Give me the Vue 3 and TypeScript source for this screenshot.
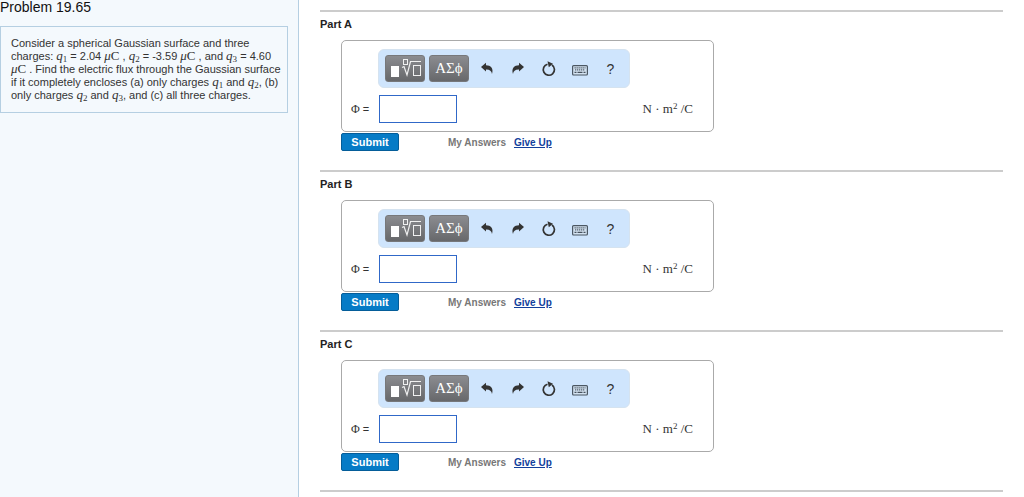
<script setup lang="ts">
import { reactive } from 'vue'

interface Part {
  id: string
  answer: string
}

const parts = reactive<Part[]>([
  { id: 'A', answer: '' },
  { id: 'B', answer: '' },
  { id: 'C', answer: '' },
])
</script>

<template>
  <div class="page">
    <aside class="sidebar">
      <h1>Problem 19.65</h1>
      <p class="statement">
        Consider a spherical Gaussian surface and three charges:
        <span class="math"><i>q</i><sub>1</sub></span> = 2.04 <span class="math"><i>μ</i>C</span> ,
        <span class="math"><i>q</i><sub>2</sub></span> = -3.59 <span class="math"><i>μ</i>C</span> , and
        <span class="math"><i>q</i><sub>3</sub></span> = 4.60
        <span class="math"><i>μ</i>C</span> . Find the electric flux through the Gaussian surface if it
        completely encloses (a) only charges <span class="math"><i>q</i><sub>1</sub></span> and
        <span class="math"><i>q</i><sub>2</sub></span>, (b) only charges
        <span class="math"><i>q</i><sub>2</sub></span> and <span class="math"><i>q</i><sub>3</sub></span>,
        and (c) all three charges.
      </p>
    </aside>

    <main class="parts">
      <section v-for="part in parts" :key="part.id" class="part">
        <h2>Part {{ part.id }}</h2>
        <form class="answer" @submit.prevent>
          <div class="frame">
            <div class="toolbar">
              <button type="button" class="palette templates" aria-label="Templates">
                <svg width="33" height="21" viewBox="0 0 33 21">
                  <rect x="2" y="8" width="8" height="11" fill="#fff" />
                  <g fill="none" stroke="#f0f0f0">
                    <rect x="14.500" y="1.500" width="4" height="5" />
                    <path d="M13 9.500l2-1 3 8.500 3.500-13.500H32" stroke-width="1.200" />
                    <rect x="24.500" y="7.500" width="7" height="10" />
                  </g>
                </svg>
              </button>
              <button type="button" class="palette symbols">ΑΣϕ</button>
              <button type="button" class="tool" aria-label="Undo">
                <svg width="14" height="14" viewBox="0 0 14 14">
                  <path d="M1 5L6 .8v2.400c4.800 0 7.800 3.300 6 8.800C11.600 8.800 9.800 7.300 6 7.400V9.500z" fill="#333" />
                </svg>
              </button>
              <button type="button" class="tool" aria-label="Redo">
                <svg width="14" height="14" viewBox="0 0 14 14">
                  <path d="M13 5L8 .8v2.400C3.200 3.200.2 6.500 2 12 2.400 8.800 4.200 7.300 8 7.400V9.500z" fill="#333" />
                </svg>
              </button>
              <button type="button" class="tool" aria-label="Reset">
                <svg width="16" height="16" viewBox="0 0 16 16">
                  <path d="M11 4A5.600 5.600 0 1 1 6.500 3.200" fill="none" stroke="#333" stroke-width="1.700" />
                  <path d="M6.500 .2l5.500 2.600L7.800 6.200z" fill="#333" />
                </svg>
              </button>
              <button type="button" class="tool" aria-label="Keyboard">
                <svg width="16" height="16" viewBox="0 0 16 16">
                  <rect x=".6" y="4.600" width="14.800" height="9.400" rx="1" fill="#d3e2f1" stroke="#4b5763" stroke-width="1.200" />
                  <path d="M2.500 6.800h11M3 8.800h10" stroke="#56616c" stroke-width="1.300" stroke-dasharray="1.300 .7" />
                  <path d="M2.500 11.300h2M5.500 11.300h5M11.500 11.300h2" stroke="#46515c" stroke-width="1.300" />
                </svg>
              </button>
              <button type="button" class="tool help" aria-label="Help">?</button>
            </div>
            <div class="entry">
              <label :for="`answer-${part.id}`"><span class="phi">Φ</span> =</label>
              <input :id="`answer-${part.id}`" v-model="part.answer" type="text" autocomplete="off" />
              <span class="units">N · m<sup>2</sup> /C</span>
            </div>
          </div>
          <div class="actions">
            <button type="submit" class="submit">Submit</button>
            <span class="my-answers">My Answers</span>
            <a href="#">Give Up</a>
          </div>
        </form>
      </section>
    </main>
  </div>
</template>

<style>
body {
  margin: 0;
  background: #fff;
}
</style>

<style scoped>
.page {
  display: flex;
  min-height: 100vh;
  box-sizing: border-box;
  font-family: "Liberation Sans", Arial, sans-serif;
  font-size: 11px;
  color: #333;
}

.sidebar {
  flex: 0 0 299px;
  box-sizing: border-box;
  padding-right: 10px;
  border-right: 1px solid #b5cfe2;
  background: #f4f9fd;
}

h1 {
  margin: 0 0 12px;
  font-size: 14px;
  font-weight: normal;
  line-height: 14px;
  color: #111;
}

.statement {
  margin: 0;
  padding: 10px 4px 10px 10px;
  border: 1px solid #b5cfe2;
  line-height: 13px;
}

.math {
  font-family: "Liberation Serif", "Times New Roman", serif;
  font-size: 13px;
  line-height: 1px;
  white-space: nowrap;
}

sub,
sup {
  font-size: 9px;
  line-height: 1px;
}

sub {
  vertical-align: -2px;
}

.parts {
  flex: 1;
  min-width: 0;
  padding: 10px 21px 4px;
}

.part {
  height: 158px;
  border-top: 2px solid #ccc;
}

.part:last-child {
  border-bottom: 2px solid #ccc;
}

h2 {
  margin: 4px 0 8px;
  font-size: 11px;
  line-height: 16px;
  color: #222;
}

.answer {
  max-width: 373px;
  margin-left: 21px;
}

.frame {
  box-sizing: border-box;
  height: 92px;
  padding: 8px 20px 9px 9px;
  border: 1px solid #aaa;
  border-radius: 5px;
}

.toolbar {
  display: flex;
  align-items: center;
  gap: 4px;
  box-sizing: border-box;
  width: 252px;
  height: 39px;
  margin-left: 27px;
  padding-left: 6px;
  border: 1px solid #d5e3f0;
  border-radius: 6px;
  background: #cfe5fd;
}

button {
  margin: 0;
  padding: 0;
  cursor: pointer;
}

.palette {
  display: flex;
  align-items: center;
  justify-content: center;
  flex: none;
  box-sizing: border-box;
  width: 40px;
  height: 27px;
  border: 1px solid #77787b;
  border-radius: 3px;
  background: linear-gradient(#8b8c90, #67686b);
  color: #fff;
}

.symbols {
  font-family: "Liberation Serif", "Times New Roman", serif;
  font-size: 15px;
}

.tool {
  display: flex;
  align-items: center;
  justify-content: center;
  width: 27px;
  height: 27px;
  border: 0;
  background: none;
  color: #333;
}

.help {
  font-family: "Liberation Sans", Arial, sans-serif;
  font-size: 14px;
}

.entry {
  display: flex;
  align-items: center;
  margin-top: 7px;
}

label {
  width: 28px;
}

.phi {
  font-family: "Liberation Serif", "Times New Roman", serif;
  font-size: 12px;
}

input {
  box-sizing: border-box;
  width: 78px;
  height: 28px;
  padding: 0 4px;
  border: 1px solid #3068c8;
  background: #fff;
  font-size: 12px;
}

.units {
  margin-left: auto;
  font-family: "Liberation Serif", "Times New Roman", serif;
  font-size: 13px;
}

.units sup {
  vertical-align: 4px;
}

.actions {
  display: flex;
  align-items: center;
  margin-top: 1px;
  font-weight: bold;
}

.submit {
  width: 58px;
  height: 18px;
  border: 1px solid #045d99;
  border-radius: 2px;
  background: #067bc6;
  color: #fff;
  font-family: inherit;
  font-size: 11px;
  font-weight: bold;
}

.my-answers {
  margin: 0 8px 0 49px;
  font-size: 10px;
  color: #777;
}

a {
  font-size: 10px;
  color: #123f9c;
}
</style>
